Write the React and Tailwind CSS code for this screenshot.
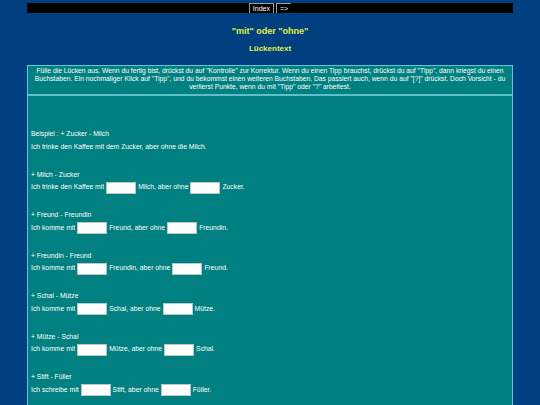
import React from 'react';

const rows = [
  { label: 'Beispiel : + Zucker - Milch', example: 'Ich trinke den Kaffee mit dem Zucker, aber ohne die Milch.' },
  { label: '+ Milch - Zucker', parts: ['Ich trinke den Kaffee mit', 'Milch, aber ohne', 'Zucker.'] },
  { label: '+ Freund - Freundin', parts: ['Ich komme mit', 'Freund, aber ohne', 'Freundin.'] },
  { label: '+ Freundin - Freund', parts: ['Ich komme mit', 'Freundin, aber ohne', 'Freund.'] },
  { label: '+ Schal - Mütze', parts: ['Ich komme mit', 'Schal, aber ohne', 'Mütze.'] },
  { label: '+ Mütze - Schal', parts: ['Ich komme mit', 'Mütze, aber ohne', 'Schal.'] },
  { label: '+ Stift - Füller', parts: ['Ich schreibe mit', 'Stift, aber ohne', 'Füller.'] },
];

const Gap = () => (
  <input type="text" className="w-[30px] h-[12px] bg-white border border-[#b8c8c8] px-[1px] text-[7px] text-black outline-none" />
);

const App = () => {
  return (
    <div className="min-h-screen bg-[#004080] pt-[3px] px-[27px] font-['Liberation_Sans',Arial,sans-serif] text-white">
      <div className="h-[10px] bg-black flex justify-center gap-[2px]">
        <span className="px-[3px] border-l border-t border-r border-[#9a9a9a] text-[7px] leading-[9px] text-white">Index</span>
        <span className="px-[3px] border-l border-t border-[#9a9a9a] text-[7px] leading-[9px] text-white">=&gt;</span>
      </div>

      <h1 className="mt-[13px] text-center text-[9px] leading-[11px] font-bold text-[#e0f040]">"mit" oder "ohne"</h1>
      <h2 className="mt-[7px] text-center text-[8px] leading-[10px] font-bold text-[#e0f040]">Lückentext</h2>

      <div className="mt-[11px] border border-[#66c6d6] bg-[#008080]">
        <div className="pt-[1px] pb-[3px] border-b-2 border-[#5cc0c8] text-center text-[6.75px] leading-[8px] whitespace-nowrap">
          Fülle die Lücken aus. Wenn du fertig bist, drückst du auf "Kontrolle" zur Korrektur. Wenn du einen Tipp brauchst, drückst du auf "Tipp", dann kriegst du einen
          <br />
          Buchstaben. Ein nochmaliger Klick auf "Tipp", und du bekommst einen weiteren Buchstaben. Das passiert auch, wenn du auf "[?]" drückst. Doch Vorsicht - du
          <br />
          verlierst Punkte, wenn du mit "Tipp" oder "?" arbeitest.
        </div>

        <div className="pt-[31px] pb-[20px] pl-[3px] text-[6.8px]">
          {rows.map((row) => (
            <div key={row.label} className="mb-[13.5px]">
              <div className="h-[13px] leading-[13px]">{row.label}</div>
              {row.example ? (
                <div className="h-[14px] leading-[14px]">{row.example}</div>
              ) : (
                <div className="h-[14px] flex items-center gap-[2px]">
                  <span>{row.parts[0]}</span>
                  <Gap />
                  <span>{row.parts[1]}</span>
                  <Gap />
                  <span>{row.parts[2]}</span>
                </div>
              )}
            </div>
          ))}
        </div>
      </div>
    </div>
  );
};

export default App;
